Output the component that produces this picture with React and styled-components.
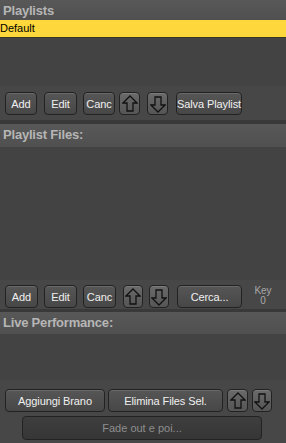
import styled, { createGlobalStyle } from "styled-components";

const GlobalStyle = createGlobalStyle`
    html, body {
        margin: 0;
        padding: 0;
        background: #444;
        overflow: hidden;
    }
`;

const ArrowIcon = ({ down }) => (
    <svg width="16" height="18" viewBox="0 0 16 18">
        <polygon
            points={down ? "8,17 15,10 11,10 11,2 5,2 5,10 1,10" : "8,1 15,8 11,8 11,16 5,16 5,8 1,8"}
            fill="none"
            stroke="#111"
            strokeWidth="1.3"
            strokeLinejoin="miter"
        />
    </svg>
);

const App = () => {
    return (
        <Wrapper>
            <GlobalStyle />
            <Header h={20}>Playlists</Header>
            <List h={66}>
                <SelectedRow>Default</SelectedRow>
            </List>
            <Toolbar h={34} pt={6}>
                <Button w={32} ml={5}>Add</Button>
                <Button w={33} ml={7}>Edit</Button>
                <Button w={32} ml={6}>Canc</Button>
                <ArrowButton w={21} ml={4}><ArrowIcon /></ArrowButton>
                <ArrowButton w={21} ml={7}><ArrowIcon down /></ArrowButton>
                <Button w={66} ml={8}>Salva Playlist</Button>
            </Toolbar>
            <Separator h={4} />
            <Header h={23}>Playlist Files:</Header>
            <List h={133} />
            <Toolbar h={29} pt={5}>
                <Button w={33} ml={5}>Add</Button>
                <Button w={33} ml={6}>Edit</Button>
                <Button w={33} ml={6}>Canc</Button>
                <ArrowButton w={20} ml={7}><ArrowIcon /></ArrowButton>
                <ArrowButton w={20} ml={6}><ArrowIcon down /></ArrowButton>
                <Button w={65} ml={8}>Cerca...</Button>
                <KeyBox>
                    <span>Key</span>
                    <span>0</span>
                </KeyBox>
            </Toolbar>
            <Separator h={3} />
            <Header h={22}>Live Performance:</Header>
            <List h={46} />
            <BottomBar>
                <Toolbar h={24} pt={0}>
                    <Button w={100} ml={5}>Aggiungi Brano</Button>
                    <Button w={115} ml={3}>Elimina Files Sel.</Button>
                    <ArrowButton w={21} ml={4}><ArrowIcon /></ArrowButton>
                    <ArrowButton w={20} ml={4}><ArrowIcon down /></ArrowButton>
                </Toolbar>
                <FadeButton>Fade out e poi...</FadeButton>
            </BottomBar>
        </Wrapper>
    );
};

export default App;

const Wrapper = styled.div`
    display: flex;
    flex-direction: column;
    width: 286px;
    height: 443px;
    background: #444;
    font-family: "Liberation Sans", Arial, sans-serif;
`;

const Header = styled.div`
    height: ${(p) => p.h}px;
    flex-shrink: 0;
    box-sizing: border-box;
    padding: 2px 0px 0px 3px;
    background: linear-gradient(#585858, #505050);
    color: #b6b6b6;
    font-size: 13px;
    font-weight: bold;
    line-height: 17px;
    letter-spacing: -0.2px;
`;

const List = styled.div`
    height: ${(p) => p.h}px;
    flex-shrink: 0;
    background: #434343;
`;

const SelectedRow = styled.div`
    height: 17px;
    background: #fdd73b;
    color: #000;
    font-size: 11px;
    line-height: 17px;
    box-shadow: 0px 1px 0px #3a3520;
`;

const Toolbar = styled.div`
    display: flex;
    align-items: flex-start;
    height: ${(p) => p.h}px;
    flex-shrink: 0;
    box-sizing: border-box;
    padding-top: ${(p) => p.pt}px;
    background: #474747;
`;

const Separator = styled.div`
    height: ${(p) => p.h}px;
    flex-shrink: 0;
    background: #393939;
`;

const Button = styled.div`
    width: ${(p) => p.w}px;
    margin-left: ${(p) => p.ml}px;
    height: 23px;
    box-sizing: border-box;
    flex-shrink: 0;
    display: flex;
    align-items: center;
    justify-content: center;
    background: linear-gradient(#565656, #474747);
    border: 1px solid #222;
    border-radius: 4px;
    box-shadow: inset 0px 1px 0px rgba(255, 255, 255, 0.12);
    color: #f0f0f0;
    font-size: 11px;
    letter-spacing: -0.1px;
    white-space: nowrap;
`;

const ArrowButton = styled(Button)`
    background: linear-gradient(#6a6a6a, #555);
    padding-top: 1px;
`;

const KeyBox = styled.div`
    display: flex;
    flex-direction: column;
    align-items: center;
    margin-left: 10px;
    width: 22px;
    color: #a8a8a8;
    font-size: 10px;
    line-height: 10px;
    padding-top: 1px;
`;

const BottomBar = styled.div`
    display: flex;
    flex-direction: column;
    flex: 1;
    box-sizing: border-box;
    padding-top: 9px;
    gap: 3px;
    background: #474747;
`;

const FadeButton = styled.div`
    width: 240px;
    height: 24px;
    margin-left: 22px;
    box-sizing: border-box;
    display: flex;
    align-items: center;
    justify-content: center;
    background: linear-gradient(#3e3e3e, #363636);
    border: 1px solid #222;
    border-radius: 4px;
    color: #8e8e8e;
    font-size: 11px;
`;
